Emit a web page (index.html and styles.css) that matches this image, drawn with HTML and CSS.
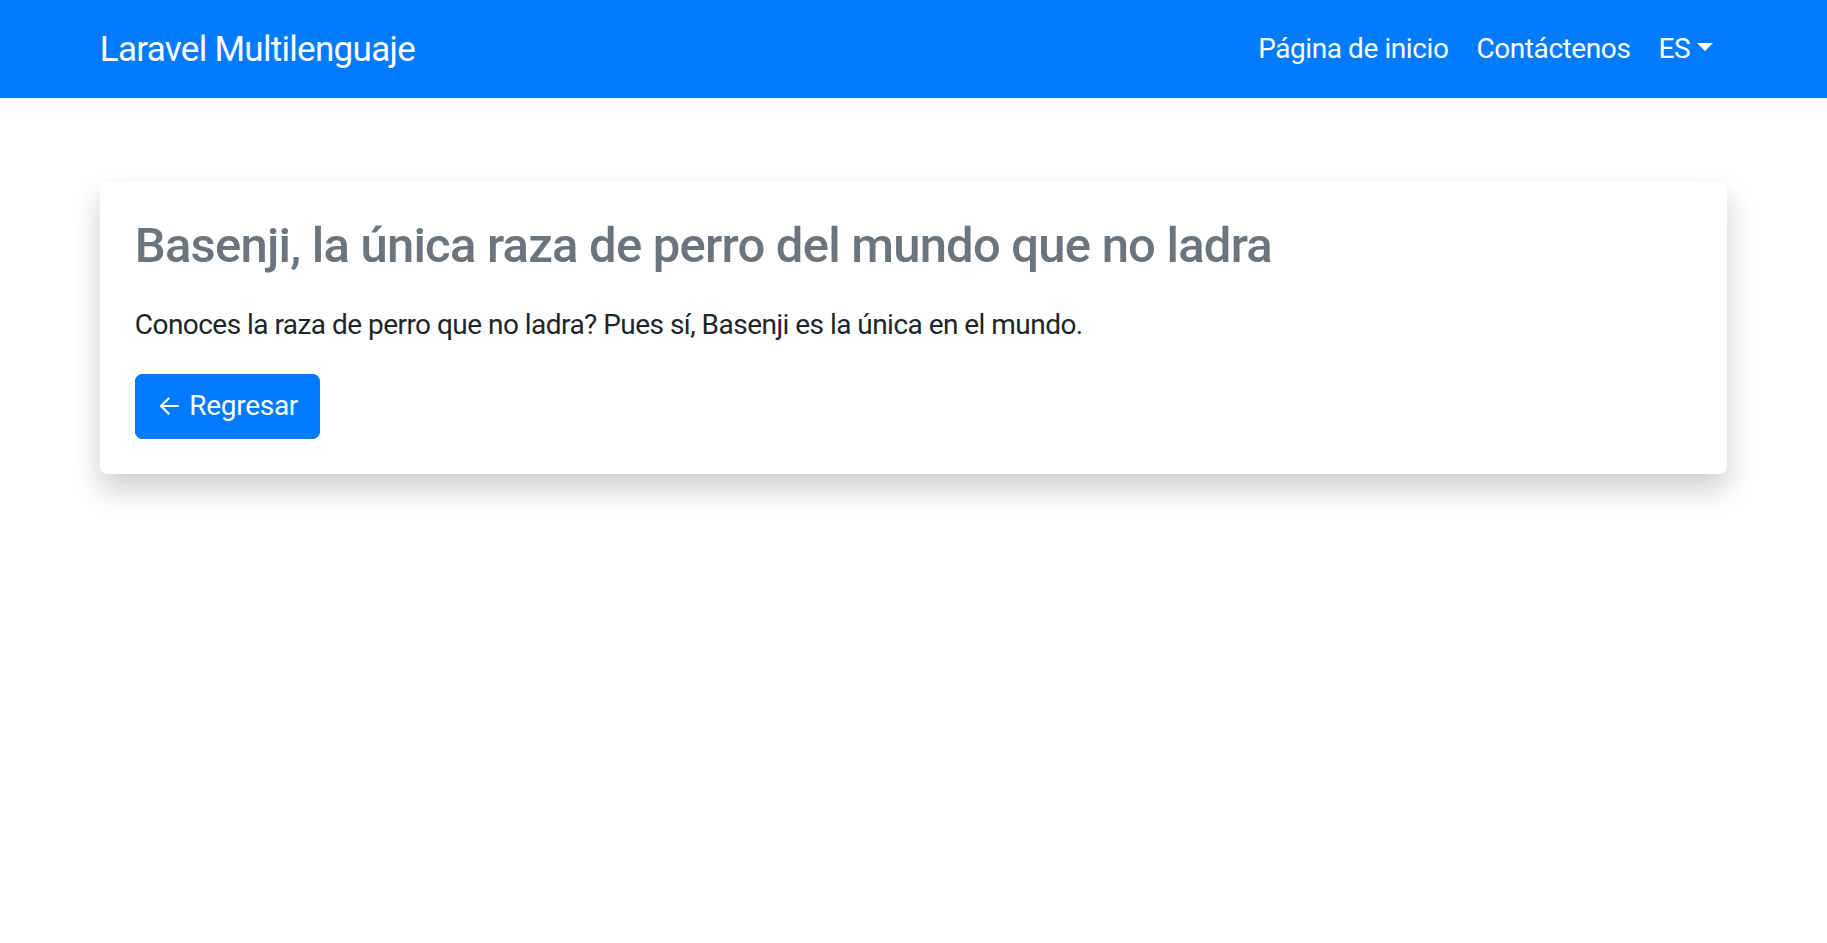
FILE: index.html
```html
<!DOCTYPE html>
<html lang="es">
<head>
<meta charset="utf-8">
<title>Laravel Multilenguaje</title>
<link rel="stylesheet" href="styles.css">
</head>
<body>
<nav class="navbar">
  <div class="container nav-inner">
    <a class="brand" href="#">Laravel Multilenguaje</a>
    <ul class="nav-links">
      <li><a class="nav-link" href="#">Página de inicio</a></li>
      <li><a class="nav-link" href="#">Contáctenos</a></li>
      <li><a class="nav-link dropdown-toggle" href="#">ES</a></li>
    </ul>
  </div>
</nav>
<main class="container main">
  <div class="card">
    <div class="card-body">
      <h3 class="card-title">Basenji, la única raza de perro del mundo que no ladra</h3>
      <p class="card-text">Conoces la raza de perro que no ladra? Pues sí, Basenji es la única en el mundo.</p>
      <a class="btn" href="#"><svg class="arrow" width="20" height="18" viewBox="0 0 20 18" aria-hidden="true"><path d="M19 9H2M9.5 1.5L2 9l7.5 7.5" fill="none" stroke="#fff" stroke-width="2.2" stroke-linecap="round" stroke-linejoin="round"/></svg> Regresar</a>
    </div>
  </div>
</main>
</body>
</html>
```

FILE: styles.css
```css
* { box-sizing: border-box; }
html, body { margin: 0; padding: 0; }
html { background: #fff; }
body {
  font-family: "Roboto", "Inter", "Liberation Sans", sans-serif;
  font-size: 28px;
  line-height: 1.5;
  color: #212529;
  background: #fff;
  letter-spacing: -0.01em;
  min-height: 943px;
}
a { text-decoration: none; }
.container {
  width: 1680px;
  margin: 0 auto;
  padding: 0 26.25px;
}
.navbar {
  background: #007bff;
  padding: 14px 0;
  height: 98px;
}
.nav-inner {
  display: flex;
  align-items: center;
  justify-content: space-between;
  height: 70px;
}
.brand {
  color: #fff;
  font-size: 35px;
  line-height: 52.5px;
  padding: 6.5px 0 4px;
  letter-spacing: -0.02em;
}
.nav-links {
  display: flex;
  list-style: none;
  margin: 0;
  padding: 0;
}
.nav-link {
  display: block;
  color: #fff;
  padding: 14px 14px;
  line-height: 42px;
  letter-spacing: -0.015em;
}
.dropdown-toggle::after {
  content: "";
  display: inline-block;
  margin-left: 0.255em;
  vertical-align: 0.255em;
  border-top: 0.3em solid #fff;
  border-right: 0.3em solid transparent;
  border-left: 0.3em solid transparent;
  border-bottom: 0;
}
.main {
  margin-top: 84px;
  padding-bottom: 80px;
}
.card {
  background: #fff;
  border-radius: 7px;
  box-shadow: 0 15px 30px rgba(0, 0, 0, 0.2);
}
.card-body { padding: 35px; }
.card-title {
  margin: 0 0 28px;
  font-size: 49px;
  font-weight: 500;
  line-height: 1.2;
  color: #6c757d;
  letter-spacing: -0.016em;
}
.card-text {
  margin: 0 0 28px;
  line-height: 42px;
  letter-spacing: -0.019em;
}
.btn {
  display: inline-flex;
  align-items: center;
  gap: 10px;
  background: #007bff;
  color: #fff;
  border: 1.75px solid #007bff;
  border-radius: 7px;
  padding: 10.5px 21px;
  line-height: 42px;
  font-size: 28px;
  letter-spacing: -0.01em;
}
.arrow { display: block; margin-left: 2.5px; }
```
